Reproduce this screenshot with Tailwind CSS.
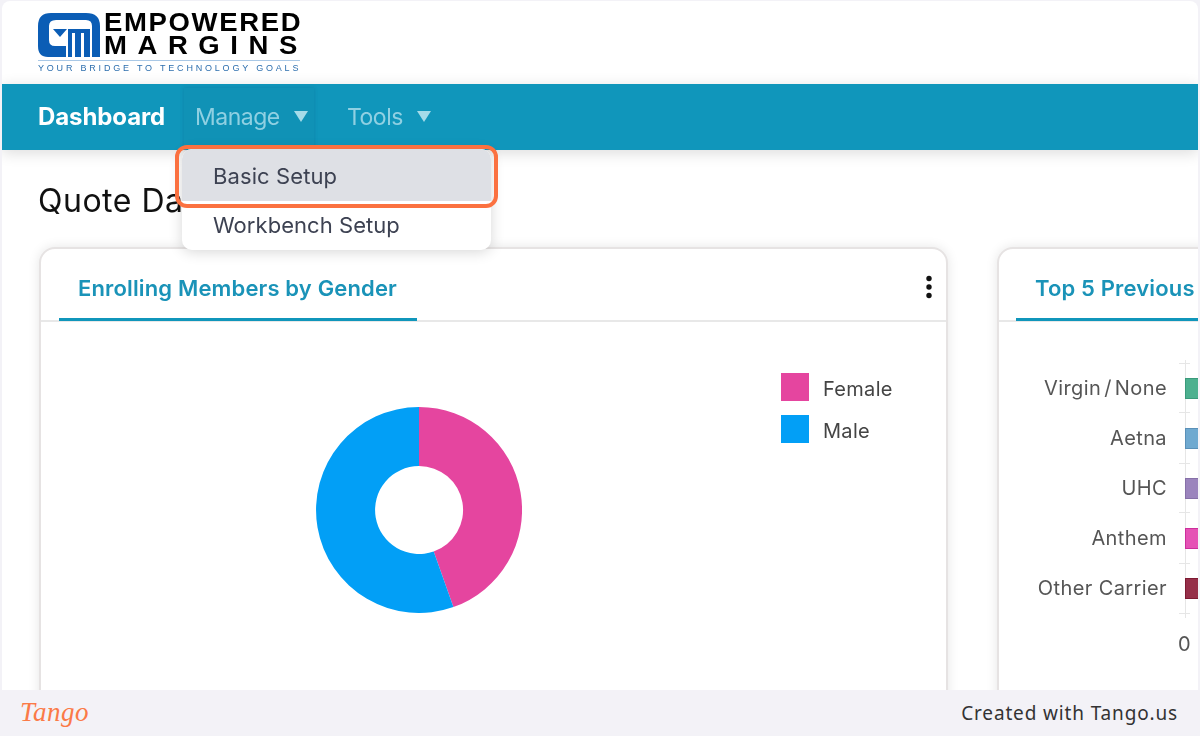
<!DOCTYPE html>
<html><head><meta charset="utf-8"><script src="https://cdn.jsdelivr.net/npm/@tailwindcss/browser@4"></script></head>
<body class="m-0">
<div class="relative w-[1200px] h-[736px] overflow-hidden bg-[#f3f2f7] flex flex-col font-['Inter',sans-serif]">
  <div class="relative h-[689px] mx-[2px] mt-[1px] bg-white rounded-t-[8px] overflow-hidden flex flex-col">
    <header class="h-[83px] relative shrink-0 pl-[36px] pt-[11px] flex items-start blur-[0.5px]">
      <svg width="62" height="46" viewBox="0 0 62 46" class="shrink-0">
        <path d="M0 34V14Q0 1 13 1H48Q62 1 62 14V45H54V14Q54 8 48 8H18Q11 8 11 14V28Q11 34 17 34H28V45H10Q0 45 0 34Z" fill="#0b5db5"/>
        <path d="M15 17H29L22 25Z" fill="#0b5db5"/>
        <path d="M30 17H52V45H46V21H43V45H37V21H34V45H30Z" fill="#0b5db5"/>
      </svg>
      <div class="ml-[4px] -mt-[1px] w-[196px]">
        <div class="origin-left scale-x-[1.1] font-['Liberation_Sans',sans-serif] font-bold text-black text-[25px] leading-[23px] tracking-[1.5px] whitespace-nowrap">EMPOWERED</div>
        <div class="origin-left scale-x-[1.1] font-['Liberation_Sans',sans-serif] font-bold text-black text-[25px] leading-[22px] tracking-[9.6px] whitespace-nowrap">MARGINS</div>
      </div>
      <div class="absolute left-[36px] top-[59px] w-[262px] border-t border-[#a9c8e6] font-['Liberation_Sans',sans-serif] text-[9px] leading-[14px] tracking-[2.8px] text-[#2e6fae] whitespace-nowrap">YOUR BRIDGE TO TECHNOLOGY GOALS</div>
    </header>
    <nav class="h-[66px] shrink-0 bg-[#1096bb] flex items-start shadow-[0_3px_14px_rgba(0,0,0,0.14)] relative z-10 blur-[0.4px]">
      <a class="ml-[36px] mt-[19px] text-white font-bold text-[24px] leading-[28px] tracking-[-0.1px] w-[146px]">Dashboard</a>
      <a class="h-[62px] mt-[4px] w-[130px] bg-[#1092b6] shadow-[0_0_4px_rgba(0,60,90,0.2)] flex items-start pl-[11px] pt-[15px] text-[#8fd0e2] text-[23px] leading-[28px] tracking-[-0.5px]">Manage
        <svg width="14" height="11" viewBox="0 0 14 11" class="ml-[14px] mt-[8px]"><path d="M0 0H14L7 11Z" fill="#a5dbe9"/></svg>
      </a>
      <a class="ml-[33px] mt-[19px] flex items-start text-[#8fd0e2] text-[23px] leading-[28px] tracking-[-0.5px]">Tools
        <svg width="14" height="11" viewBox="0 0 14 11" class="ml-[14px] mt-[8px]"><path d="M0 0H14L7 11Z" fill="#a5dbe9"/></svg>
      </a>
    </nav>
    <main class="flex-1 pl-[36px] pt-[31px] min-h-0 blur-[0.4px]">
      <h1 class="text-[32px] leading-[40px] text-[#111] font-normal tracking-[0.5px]">Quote Dashboard</h1>
      <div class="flex gap-[49px] mt-[26px] ml-[1px]">
        <section class="w-[909px] h-[480px] shrink-0 rounded-t-[16px] border-2 border-[#e6e3e3] shadow-[0_0_12px_rgba(0,0,0,0.10)] bg-white">
          <div class="relative h-[73px] border-b-2 border-[#e8e8e8]">
            <div class="absolute left-[18px] top-0 w-[358px] h-[72px] border-b-[3px] border-[#1096bb] pl-[19px] pt-[23px] text-[#1a93b8] text-[22px] leading-[32px] font-semibold tracking-[0.15px] whitespace-nowrap">Enrolling Members by Gender</div>
            <svg width="8" height="24" viewBox="0 0 8 24" class="absolute left-[884px] top-[26px]"><circle cx="4" cy="3.5" r="2.7" fill="#111"/><circle cx="4" cy="12" r="2.7" fill="#111"/><circle cx="4" cy="20.5" r="2.7" fill="#111"/></svg>
          </div>
          <div class="relative">
            <svg width="206" height="206" viewBox="0 0 206 206" class="absolute left-[275px] top-[85px]">
              <path d="M103 0A103 103 0 0 1 137.4 200.1L117.7 144.5A44 44 0 0 0 103 59Z" fill="#e5459f"/>
              <path d="M103 0A103 103 0 1 0 137.4 200.1L117.7 144.5A44 44 0 1 1 103 59Z" fill="#029ff6"/>
            </svg>
            <div class="absolute left-[740px] top-[53px] flex flex-col gap-[14px] text-[#444] text-[20px] leading-[28px] tracking-[0.3px]">
              <div class="flex items-center gap-[14px]"><span class="w-[28px] h-[28px] -translate-y-[2px] bg-[#e5459f]"></span>Female</div>
              <div class="flex items-center gap-[14px]"><span class="w-[28px] h-[28px] -translate-y-[2px] bg-[#029ff6]"></span>Male</div>
            </div>
          </div>
        </section>
        <section class="w-[300px] h-[480px] shrink-0 rounded-t-[16px] border-2 border-[#e6e3e3] shadow-[0_0_12px_rgba(0,0,0,0.10)] bg-white">
          <div class="relative h-[73px] border-b-2 border-[#e8e8e8]">
            <div class="absolute left-[17px] top-0 w-[280px] h-[72px] border-b-[3px] border-[#1096bb] pl-[19px] pt-[23px] text-[#1a93b8] text-[22px] leading-[32px] font-semibold tracking-[0.15px] whitespace-nowrap overflow-hidden">Top 5 Previous Carriers</div>
          </div>
          <div class="relative">
            <div class="absolute left-[186px] top-[38px] w-[1px] h-[258px] bg-[#e6e6e6]"></div>
            <div class="absolute left-[180px] top-[41px] w-[11px] h-[1px] bg-[#e6e6e6]"></div>
            <div class="absolute left-[180px] top-[90px] w-[11px] h-[1px] bg-[#e6e6e6]"></div>
            <div class="absolute left-[180px] top-[141px] w-[11px] h-[1px] bg-[#e6e6e6]"></div>
            <div class="absolute left-[180px] top-[190px] w-[11px] h-[1px] bg-[#e6e6e6]"></div>
            <div class="absolute left-[180px] top-[241px] w-[11px] h-[1px] bg-[#e6e6e6]"></div>
            <div class="absolute left-[180px] top-[291px] w-[11px] h-[1px] bg-[#e6e6e6]"></div>
            <div class="relative flex flex-col items-end w-[168px] pt-[52px] gap-[22px] text-[#555] text-[20px] leading-[28px] tracking-[0.4px] whitespace-nowrap">
              <div class="flex items-center [word-spacing:-3px]">Virgin / None<span class="ml-[18px] w-[14px] h-[21px] -mr-[32px] bg-[#4cb08f] border border-[#3a9a7b]"></span></div>
              <div class="flex items-center">Aetna<span class="ml-[18px] w-[14px] h-[21px] -mr-[32px] bg-[#6fa9d0] border border-[#5a90b8]"></span></div>
              <div class="flex items-center">UHC<span class="ml-[18px] w-[14px] h-[21px] -mr-[32px] bg-[#9b84bd] border border-[#8670a8]"></span></div>
              <div class="flex items-center">Anthem<span class="ml-[18px] w-[14px] h-[21px] -mr-[32px] bg-[#e552b5] border border-[#cc2f9c]"></span></div>
              <div class="flex items-center">Other Carrier<span class="ml-[18px] w-[14px] h-[21px] -mr-[32px] bg-[#962f49] border border-[#7d1a32]"></span></div>
            </div>
            <div class="ml-[179px] mt-[28px] text-[#555] text-[20px] leading-[28px]">0</div>
          </div>
        </section>
      </div>
    </main>
  </div>
  <footer class="h-[46px] shrink-0 flex items-center justify-between pl-[20px] pr-[22px] bg-[#f3f2f7] rounded-b-[8px]">
    <span class="font-['Liberation_Serif',serif] italic text-[#fb7a47] text-[27px] leading-[30px] -mt-[2px] tracking-[0.5px]">Tango</span>
    <span class="text-[#333] text-[19px] leading-[24px] tracking-[0.85px] font-['Noto_Sans',sans-serif]">Created with Tango.us</span>
  </footer>
  <div class="absolute z-20 left-[182px] top-[149px] w-[309px] h-[101px] bg-white rounded-[10px] shadow-[0_2px_14px_rgba(0,0,0,0.16)] overflow-hidden flex flex-col text-[#3d4252] text-[22px] leading-[28px] blur-[0.4px]">
    <div class="h-[52px] bg-[#dee0e5] pl-[31px] pt-[13px] tracking-[0.1px]">Basic Setup</div>
    <div class="pl-[31px] pt-[10px] tracking-[0.05px]">Workbench Setup</div>
  </div>
  <div class="absolute z-30 left-[175px] top-[145px] w-[323px] h-[63px] rounded-[12px] border-[4px] border-[#fb7140]"></div>
</div>
</body></html>
